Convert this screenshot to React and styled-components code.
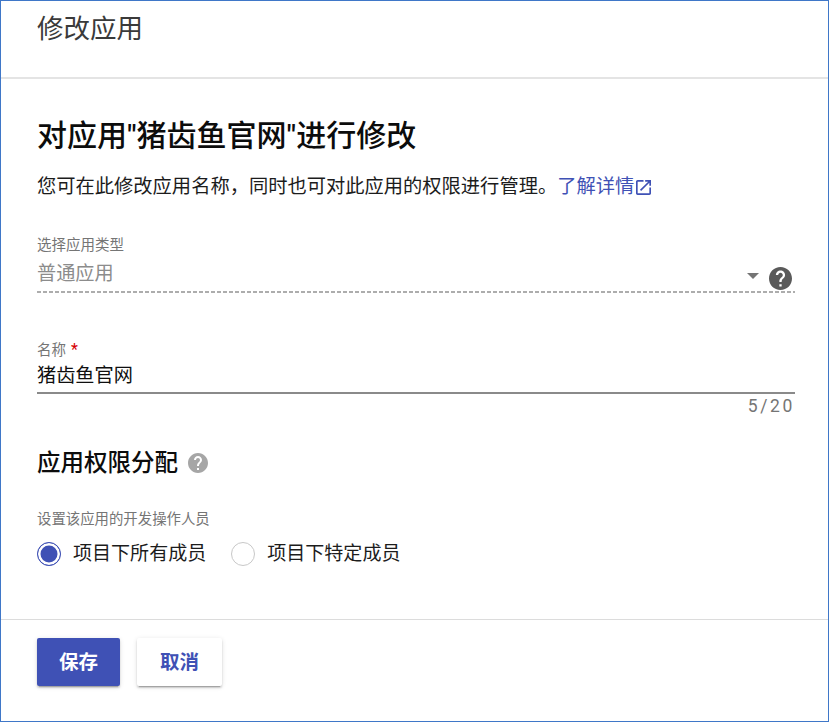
import React from 'react';
import styled, { createGlobalStyle } from 'styled-components';

const GlobalStyle = createGlobalStyle`
  html, body {
    margin: 0;
    padding: 0;
    background: #fff;
  }
  * {
    box-sizing: border-box;
  }
`;

const Frame = styled.div`
  width: 829px;
  height: 722px;
  display: flex;
  flex-direction: column;
  border: 1px solid #3f77c8;
  background: #fff;
  font-family: Roboto, "Noto Sans CJK SC", sans-serif;
  color: #000;
  overflow: hidden;
`;

const Header = styled.header`
  height: 78px;
  flex: none;
  padding: 9px 0 0 36px;
  border-bottom: 2px solid #e4e4e4;
`;

const PageTitle = styled.h1`
  margin: 0;
  font-size: 26.5px;
  line-height: 38px;
  font-weight: 400;
  color: #3a3a3a;
`;

const Content = styled.main`
  flex: 1;
  padding: 37px 33px 0 36px;
`;

const Heading = styled.h2`
  margin: 0;
  font-size: 30px;
  line-height: 40px;
  font-weight: 500;
  color: #0c0c0c;
`;

const Description = styled.p`
  margin: 17px 0 0;
  font-size: 19.27px;
  line-height: 28px;
  color: #1c1c1c;
  display: flex;
  align-items: center;
`;

const DocLink = styled.a`
  display: inline-flex;
  align-items: center;
  gap: 2px;
  color: #3f51b5;
`;

const Field = styled.div`
  margin-top: ${(p) => p.$top}px;
`;

const FieldLabel = styled.label`
  display: block;
  font-size: 14.5px;
  line-height: 18px;
  color: #757575;
`;

const Required = styled.span`
  color: #d50000;
  margin-left: 5px;
  font-size: 16px;
`;

const SelectRow = styled.div`
  display: flex;
  align-items: center;
  height: 38px;
  background-image: linear-gradient(to right, #adadad 0, #adadad 4px, transparent 4px);
  background-size: 6px 2px;
  background-repeat: repeat-x;
  background-position: left bottom;
`;

const SelectValue = styled.span`
  flex: 1;
  margin-bottom: 2px;
  font-size: 19.2px;
  line-height: 27px;
  color: #8c8c8c;
`;

const Caret = styled.span`
  width: 0;
  height: 0;
  margin: 4px 10px 0 0;
  border-left: 6px solid transparent;
  border-right: 6px solid transparent;
  border-top: 6px solid #757575;
`;

const HelpIcon = styled.svg`
  display: block;
  flex: none;
  margin: ${(p) => p.$margin};
`;

const NameValue = styled.div`
  height: 34px;
  padding-top: 2px;
  font-size: 19.2px;
  line-height: 27px;
  color: #0f0f0f;
  border-bottom: 2px solid #8a8a8a;
`;

const Counter = styled.div`
  margin-top: 2px;
  text-align: right;
  font-size: 17.5px;
  line-height: 20px;
  letter-spacing: 2.6px;
  color: #757575;
`;

const SectionTitle = styled.h3`
  display: flex;
  align-items: center;
  margin: 30px 0 0;
  font-size: 23.5px;
  line-height: 34px;
  font-weight: 500;
  color: #0c0c0c;
`;

const RadioCaption = styled.div`
  margin-top: 31px;
  font-size: 14.4px;
  line-height: 18px;
  color: #757575;
`;

const RadioRow = styled.div`
  display: flex;
  align-items: center;
  gap: 25px;
  margin-top: 11px;
`;

const RadioOption = styled.label`
  display: flex;
  align-items: center;
  gap: 12px;
  font-size: 19.05px;
  line-height: 28px;
  color: #1c1c1c;
`;

const RadioMark = styled.span`
  display: block;
  width: 24px;
  height: 24px;
  border-radius: 50%;
  border: ${(p) => (p.$checked ? '1.5px solid #3f51b5' : '1.5px solid #c8c8c8')};
  background: ${(p) => (p.$checked ? '#3f51b5' : '#fff')};
  box-shadow: ${(p) => (p.$checked ? 'inset 0 0 0 2.5px #fff' : 'none')};
`;

const Footer = styled.footer`
  flex: none;
  height: 102px;
  padding: 18px 0 0 36px;
  display: flex;
  align-items: flex-start;
  gap: 17px;
  border-top: 1px solid #dcdcdc;
`;

const Button = styled.button`
  height: 48px;
  width: ${(p) => p.$width}px;
  padding: 0 0 3px;
  border: none;
  border-radius: 2px;
  font-family: inherit;
  font-size: 19.5px;
  font-weight: 700;
  color: ${(p) => (p.$primary ? '#fff' : '#3f51b5')};
  background: ${(p) => (p.$primary ? '#3f51b5' : '#fff')};
  box-shadow: 0 3px 1px -2px rgba(0, 0, 0, 0.2), 0 2px 2px 0 rgba(0, 0, 0, 0.14), 0 1px 5px 0 rgba(0, 0, 0, 0.12);
`;

const Help = ({ size, color, margin }) => (
  <HelpIcon $margin={margin} width={size} height={size} viewBox="2 2 20 20" fill={color}>
    <path d="M12 2C6.48 2 2 6.48 2 12s4.48 10 10 10 10-4.48 10-10S17.52 2 12 2zm1 17h-2v-2h2v2zm2.07-7.75l-.9.92C13.45 12.9 13 13.5 13 15h-2v-.5c0-1.1.45-2.1 1.17-2.83l1.24-1.26c.37-.36.59-.86.59-1.41 0-1.1-.9-2-2-2s-2 .9-2 2H8c0-2.21 1.79-4 4-4s4 1.79 4 4c0 .88-.36 1.68-.93 2.25z" />
  </HelpIcon>
);

const ExternalIcon = () => (
  <svg width="15" height="15" viewBox="3 3 18 18" fill="#3f51b5">
    <path d="M19 19H5V5h7V3H5c-1.11 0-2 .9-2 2v14c0 1.1.89 2 2 2h14c1.1 0 2-.9 2-2v-7h-2v7zM14 3v2h3.59l-9.83 9.83 1.41 1.41L19 6.41V10h2V3h-7z" />
  </svg>
);

export default function App() {
  return (
    <>
      <GlobalStyle />
      <Frame>
        <Header>
          <PageTitle>修改应用</PageTitle>
        </Header>
        <Content>
          <Heading>对应用"猪齿鱼官网"进行修改</Heading>
          <Description>
            您可在此修改应用名称，同时也可对此应用的权限进行管理。
            <DocLink>
              了解详情
              <ExternalIcon />
            </DocLink>
          </Description>
          <Field $top={36}>
            <FieldLabel>选择应用类型</FieldLabel>
            <SelectRow>
              <SelectValue>普通应用</SelectValue>
              <Caret />
              <Help size={23} color="#5a5a5a" margin="8px 3px 0 0" />
            </SelectRow>
          </Field>
          <Field $top={48}>
            <FieldLabel>
              名称<Required>*</Required>
            </FieldLabel>
            <NameValue>猪齿鱼官网</NameValue>
            <Counter>5/20</Counter>
          </Field>
          <SectionTitle>
            应用权限分配
            <Help size={20} color="#a6a6a6" margin="0 0 0 10px" />
          </SectionTitle>
          <RadioCaption>设置该应用的开发操作人员</RadioCaption>
          <RadioRow>
            <RadioOption>
              <RadioMark $checked />
              项目下所有成员
            </RadioOption>
            <RadioOption>
              <RadioMark />
              项目下特定成员
            </RadioOption>
          </RadioRow>
        </Content>
        <Footer>
          <Button $primary $width={83}>保存</Button>
          <Button $width={85}>取消</Button>
        </Footer>
      </Frame>
    </>
  );
}
